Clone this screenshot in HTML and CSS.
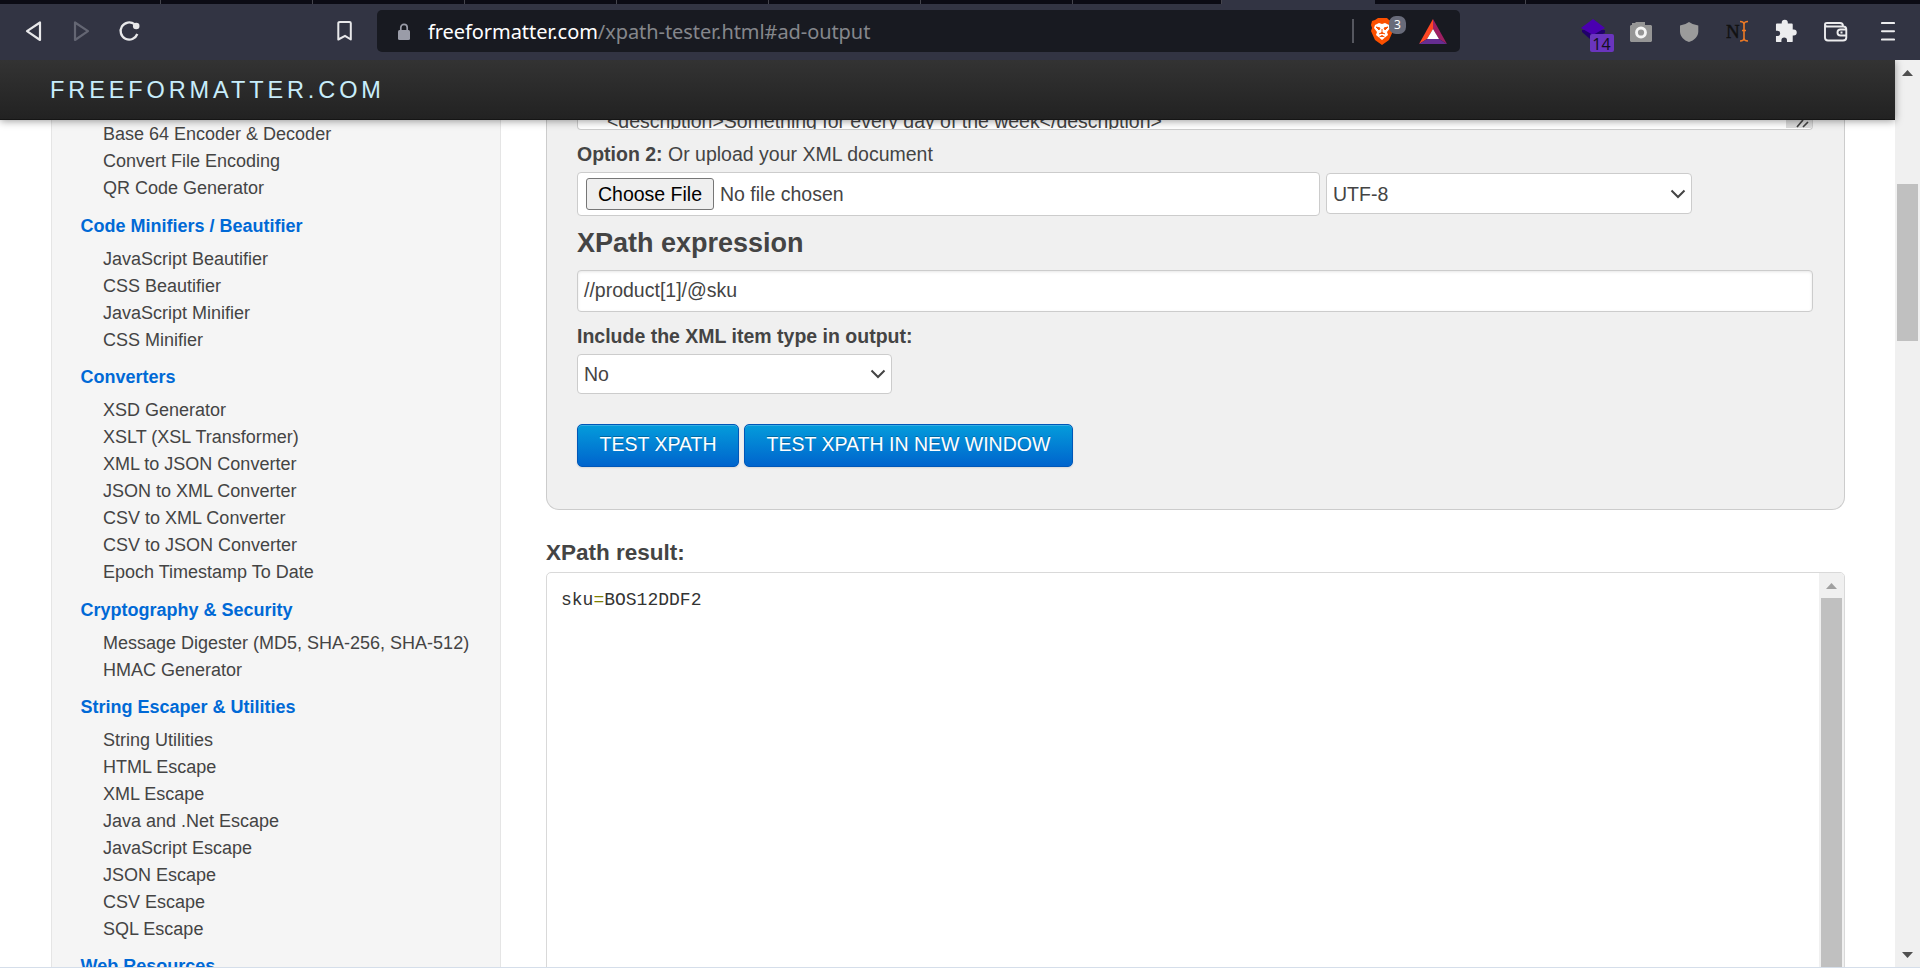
FILE: index.html
```html
<!DOCTYPE html>
<html lang="en">
<head>
<meta charset="utf-8">
<title>XPath Tester</title>
<link rel="stylesheet" href="styles.css">
</head>
<body>
<div class="tabs"><span class="tab t1"></span><span class="tab t2"></span><span class="tab t2"></span><span class="tab t2"></span><span class="tab t2"></span><span class="tab t2"></span><span class="tab t2"></span><span class="tab t3"></span><span class="tab active"></span><span class="tab t4"></span></div>
<div class="toolbar">
  <svg class="nav" viewBox="0 0 150 48" width="150" height="48" fill="none" stroke-width="2.2" stroke-linejoin="round">
    <path d="M40 18.500v17.500L27 27.200z" stroke="#e8e8ea" />
    <path d="M75 18.500v17.500L88 27.200z" stroke="#646673" />
    <path d="M134.500 20.200A8.600 8.600 0 1 0 137.300 30" stroke="#e8e8ea" stroke-width="2.300" />
    <circle cx="136.200" cy="22" r="3.300" fill="#e8e8ea" />
  </svg>
  <svg class="bookmark" viewBox="0 0 20 24" width="20" height="24"><path d="M5 3h9.500q1.300 0 1.300 1.300V20.500L10 16.800 3.300 20.500V4.300Q3.300 3 5 3z" fill="none" stroke="#e8e8ea" stroke-width="2" stroke-linejoin="round"/></svg>
  <div class="address">
    <svg class="lock" viewBox="0 0 14 18" width="14" height="18"><rect x="1" y="7" width="12" height="10" rx="1.500" fill="#9a9ca8"/><path d="M3.800 7V4.500a3.200 3.200 0 0 1 6.400 0V7" fill="none" stroke="#9a9ca8" stroke-width="1.700"/></svg>
    <span class="url"><b>freeformatter.com</b>/xpath-tester.html#ad-output</span>
    <span class="divider"></span>
    <svg class="brave" viewBox="0 0 42 32" width="42" height="32">
      <path d="M8 2h9l2 2 3 1 1 4-1 3 1 3-4 9-7 5-7-5-4-9 1-3-1-3 1-4 3-1z" fill="#fb5000"/>
      <path d="M5 9l4-2 3 1 3-1 4 2 1 3-3 4 1 3-6 5-6-5 1-3-3-4z" fill="#fff"/>
      <path d="M6 11l4 1-1 2zM18 11l-4 1 1 2zM12 13v4M9 18l3-1.500 3 1.500M9.500 21l2.500-1.500 2.500 1.500" fill="#fb5000" stroke="#fb5000" stroke-width="1"/>
      <rect x="19" y="0" width="17" height="18" rx="7" fill="#686b7a"/>
      <text x="27.500" y="13" text-anchor="middle" class="count">3</text>
    </svg>
    <svg class="bat" viewBox="0 0 28 26" width="28" height="26"><path d="M14 0L0 25l8-5 6-10z" fill="#ff4724"/><path d="M14 0l14 25-8-5-6-10z" fill="#9e1f63"/><path d="M0 25h28l-8-5H8z" fill="#662d91"/><path d="M14 10l6 10H8z" fill="#fff"/></svg>
  </div>
  <div class="extensions">
    <svg viewBox="0 0 36 36" width="36" height="36"><path d="M2 14l8 7 15-6v-3H2z" fill="#20006b"/><path d="M13 1l12 9-12 7L1 10z" fill="#4a00b0"/><rect x="10" y="16" width="24" height="18" rx="2" fill="#6a35be"/><text x="21.500" y="31.500" text-anchor="middle" class="badge">14</text></svg>
    <svg class="e-camera" viewBox="0 0 24 23" width="24" height="23"><path d="M2 5h1V3h3l1-1h9v3h6l1 1v15l-1 1H2l-1-1V6z" fill="#969696"/><circle cx="12" cy="12.500" r="4.500" fill="#969696" stroke="#f5f5f5" stroke-width="2.800"/></svg>
    <svg class="e-shield" viewBox="0 0 22 22" width="22" height="22"><path d="M11 1q4 3 9.300 3.500v6c0 5-4 9-9.300 10.500C6 19.500 2 15.500 2 10.500v-6Q7 4 11 1z" fill="#9b9b9b"/></svg>
    <svg class="e-cursor" viewBox="0 0 24 23" width="24" height="23"><text x="0" y="17.500" class="n-mark">N</text><path d="M14 1.500q4 0 4 3 0-3 4-3M18 4v15M14 21q4 0 4-3 0 3 4 3M16 10.500h4" fill="none" stroke="#ee7a25" stroke-width="1.600"/></svg>
    <svg class="e-puzzle" viewBox="0 0 24 26" width="23" height="24" preserveAspectRatio="none"><path d="M2 5h5V4a3.200 3.200 0 0 1 6.400 0v1H17.500q1 0 1 1v5.500h1a3.200 3.200 0 0 1 0 6.400h-1V24q0 1-1 1H12.500v-2a2.900 2.900 0 0 0-5.800 0v2H2q-1 0-1-1v-5.500h1.500a2.900 2.900 0 0 0 0-5.800H1V6q0-1 1-1z" fill="#ececee"/></svg>
    <svg class="e-wallet" viewBox="0 0 26 22" width="26" height="22" fill="none" stroke="#ececee" stroke-width="1.900"><path d="M2 3.500v13q0 3 3 3h15q3.300 0 3.300-3V8.500q0-3-3-3H4Q2 5.500 2 3.500 2 2 4 2h13q3 0 3 3"/><path d="M23.500 8.500h-6q-3 0-3 3t3 3h6M17.500 11.500h2"/></svg>
    <svg class="e-menu" viewBox="0 0 14 21" width="14" height="21" stroke="#ececee" stroke-width="2.100" stroke-linecap="round"><path d="M1 2h12M1 10.200h12M1 18.500h12"/></svg>
  </div>
</div>
<div class="viewport">
  <div class="page">
    <header class="site-header">FREEFORMATTER.COM</header>
    <div class="columns">
      <nav class="sidebar">
        <ul class="first"><li>Base 64 Encoder &amp; Decoder</li><li>Convert File Encoding</li><li>QR Code Generator</li></ul>
        <h4>Code Minifiers / Beautifier</h4>
        <ul><li>JavaScript Beautifier</li><li>CSS Beautifier</li><li>JavaScript Minifier</li><li>CSS Minifier</li></ul>
        <h4>Converters</h4>
        <ul><li>XSD Generator</li><li>XSLT (XSL Transformer)</li><li>XML to JSON Converter</li><li>JSON to XML Converter</li><li>CSV to XML Converter</li><li>CSV to JSON Converter</li><li>Epoch Timestamp To Date</li></ul>
        <h4>Cryptography &amp; Security</h4>
        <ul><li>Message Digester (MD5, SHA-256, SHA-512)</li><li>HMAC Generator</li></ul>
        <h4>String Escaper &amp; Utilities</h4>
        <ul><li>String Utilities</li><li>HTML Escape</li><li>XML Escape</li><li>Java and .Net Escape</li><li>JavaScript Escape</li><li>JSON Escape</li><li>CSV Escape</li><li>SQL Escape</li></ul>
        <h4>Web Resources</h4>
      </nav>
      <main class="content">
        <section class="panel">
          <div class="source"><span>&lt;description&gt;Something for every day of the week&lt;/description&gt;</span><svg viewBox="0 0 26 10" width="26" height="10"><rect width="26" height="8" fill="#dcdcdc"/><path d="M11 7L17 0M17 7l5-5" stroke="#444" stroke-width="1.700"/></svg></div>
          <p class="option"><b>Option 2:</b> Or upload your XML document</p>
          <div class="upload">
            <div class="file"><span class="choose">Choose File</span><span>No file chosen</span></div>
            <div class="select encoding">UTF-8<svg viewBox="0 0 16 10" width="16" height="10"><path d="M1.500 1.500L8 8l6.500-6.500"/></svg></div>
          </div>
          <h2>XPath expression</h2>
          <div class="input">//product[1]/@sku</div>
          <p class="label">Include the XML item type in output:</p>
          <div class="select include">No<svg viewBox="0 0 16 10" width="16" height="10"><path d="M1.500 1.500L8 8l6.500-6.500"/></svg></div>
          <div class="buttons"><span class="btn">TEST XPATH</span><span class="btn">TEST XPATH IN NEW WINDOW</span></div>
        </section>
        <h3>XPath result:</h3>
        <div class="result">
          <pre>sku<i>=</i>BOS12DDF2</pre>
          <div class="inner-scroll"><span class="up"></span><span class="thumb"></span></div>
        </div>
      </main>
    </div>
  </div>
  <div class="scroll"><span class="up"></span><span class="thumb"></span><span class="down"></span></div>
</div>
<div class="bottom-line"></div>
</body>
</html>
```
FILE: styles.css
```css
* { box-sizing: border-box; }
body { margin: 0; width: 1920px; height: 968px; overflow: hidden; display: flex; flex-direction: column; background: #fff; color: #444; font: 19.5px/24px "Liberation Sans", Arial, sans-serif; }
ul, p, h2, h3, h4, pre { margin: 0; padding: 0; }
svg { display: block; flex: none; }

.tabs { height: 4px; flex: none; display: flex; background: #0b0b14; }
.tab { border-right: 1px solid #45454d; flex: none; }
.t1 { width: 161px; }
.t2 { width: 152px; }
.t3 { width: 149px; }
.active { width: 153px; background: #323443; border: 0; }
.t4 { width: 151px; }

.toolbar { height: 56px; flex: none; display: flex; background: #323443; }
.bookmark { margin: 15px 0 0 185px; }
.address { width: 1083px; height: 42px; margin: 6px 0 0 22px; display: flex; background: #181a21; border-radius: 5px; }
.lock { margin: 13px 0 0 20px; }
.url { margin-left: 17px; width: 924px; line-height: 43px; font-family: "Noto Sans", sans-serif; font-size: 20px; letter-spacing: -.070px; color: #85878c; white-space: nowrap; }
.url b { font-weight: 400; color: #fff; }
.divider { width: 2px; height: 24px; margin-top: 9px; background: #55575f; }
.brave { margin: 6px 0 0 16px; }
.count { font: 12px "Noto Sans", sans-serif; fill: #fff; }
.bat { margin: 9px 0 0 7px; }
.extensions { display: flex; margin-left: 120px; padding-top: 14px; }
.badge { font: 16px "Noto Sans", sans-serif; fill: #15101f; }
.e-camera { margin: 2px 0 0 13px; }
.e-shield { margin: 3px 0 0 25px; }
.e-cursor { margin: 2px 0 0 26px; }
.n-mark { font: 19px "Liberation Serif", serif; fill: #111; stroke: #111; stroke-width: .400px; }
.e-puzzle { margin: 1px 0 0 25px; }
.e-wallet { margin: 3px 0 0 25px; }
.e-menu { margin: 3px 0 0 32px; }

.viewport { height: 907px; flex: none; display: flex; overflow: hidden; }
.page { width: 1895px; display: flex; flex-direction: column; }
.site-header { position: relative; z-index: 1; height: 60px; flex: none; padding-left: 50px; line-height: 60px; font-size: 23.500px; letter-spacing: 3.900px; color: #c8edfb; background: linear-gradient(#333, #222); border-bottom: 1px solid #151515; box-shadow: 0 1px 8px rgba(0, 0, 0, .4); }
.columns { display: flex; }
.sidebar { width: 450px; height: 847px; margin-left: 51px; padding-top: 1px; overflow: hidden; background: #f5f5f5; border: solid #e5e5e5; border-width: 0 1px; font-size: 18px; line-height: 27px; }
.sidebar ul { list-style: none; padding-left: 51px; }
.sidebar .first { margin-bottom: 11px; }
.sidebar h4 { margin: 10px 0 6px 28.500px; height: 27px; font-size: 18px; color: #0069d6; }
.sidebar h4 + ul { margin-bottom: 10.300px; }

.content { width: 1299px; margin-left: 45px; }
.panel { height: 390px; padding: 0 31px 0 30px; background: #f0f0f0; border: 1px solid #ccc; border-top: 0; border-radius: 0 0 13px 13px; }
.source { height: 10px; width: 1236px; padding-left: 29px; display: flex; justify-content: space-between; overflow: hidden; background: #fff; border: 1px solid #ccc; border-top: 0; border-radius: 0 0 4px 4px; line-height: 24px; }
.source span { margin-top: -11px; letter-spacing: -.020px; }
.option { margin-top: 12px; }
.upload { display: flex; gap: 6px; margin-top: 6px; }
.file { display: flex; width: 743px; height: 44px; padding: 5px 8px; gap: 6px; line-height: 32px; background: #fff; border: 1px solid #ccc; border-radius: 4px; }
.choose { width: 128px; height: 32px; line-height: 30px; text-align: center; color: #000; background: #efefef; border: 1px solid #767676; border-radius: 3px; }
.select { display: flex; align-items: center; justify-content: space-between; padding: 0 5px 0 6px; background: #fff; border: 1px solid #ccc; border-radius: 4px; }
.select path { fill: none; stroke: #444; stroke-width: 2; }
.encoding { width: 366px; height: 41px; margin-top: 1px; }
h2 { margin-top: 9px; font-size: 27px; line-height: 36px; }
.input { width: 1236px; height: 42px; margin-top: 9px; padding-left: 6px; line-height: 38px; background: #fff; border: 1px solid #ccc; border-radius: 4px; box-shadow: inset 0 1px 3px rgba(0, 0, 0, .1); }
.label { margin-top: 12px; font-weight: 700; }
.include { width: 315px; height: 40px; margin-top: 6px; }
.buttons { display: flex; gap: 5px; margin-top: 30px; }
.btn { height: 43px; padding: 0 21.500px; line-height: 38px; color: #fff; background: linear-gradient(#049cdb, #0064cd); border: 1px solid #0057b8; border-radius: 5px; text-shadow: 0 -1px 0 rgba(0, 0, 0, .25); box-shadow: inset 0 1px 0 rgba(255, 255, 255, .2), 0 1px 2px rgba(0, 0, 0, .1); white-space: nowrap; }
h3 { margin-top: 28px; font-size: 22.500px; line-height: 30px; }
.result { display: flex; justify-content: space-between; height: 400px; margin-top: 4px; border: 1px solid #d9d9d9; border-radius: 5px; overflow: hidden; }
pre { margin: 16px 0 0 14px; color: #333; font: 18px/22px "Liberation Mono", monospace; }
pre i { font-style: normal; color: #808000; }
.inner-scroll { width: 25px; background: #f0f0f0; padding-left: 2px; }
.inner-scroll .thumb { width: 21px; height: 380px; margin-top: 9px; background: #c0c0c0; display: block; }
.up, .down { display: block; width: 11px; height: 6px; background: #505050; }
.up { clip-path: polygon(50% 0, 100% 100%, 0 100%); }
.down { clip-path: polygon(0 0, 100% 0, 50% 100%); }
.inner-scroll .up { margin: 10px 0 0 5px; background: #a0a0a0; }
.scroll { width: 25px; height: 907px; display: flex; flex-direction: column; align-items: center; background: #f0f0f0; }
.scroll .up { margin-top: 10px; }
.scroll .thumb { width: 21px; height: 157px; margin-top: 108px; background: #c0c0c0; }
.scroll .down { margin-top: 611px; }
.bottom-line { height: 1px; background: #d5deea; }
```
